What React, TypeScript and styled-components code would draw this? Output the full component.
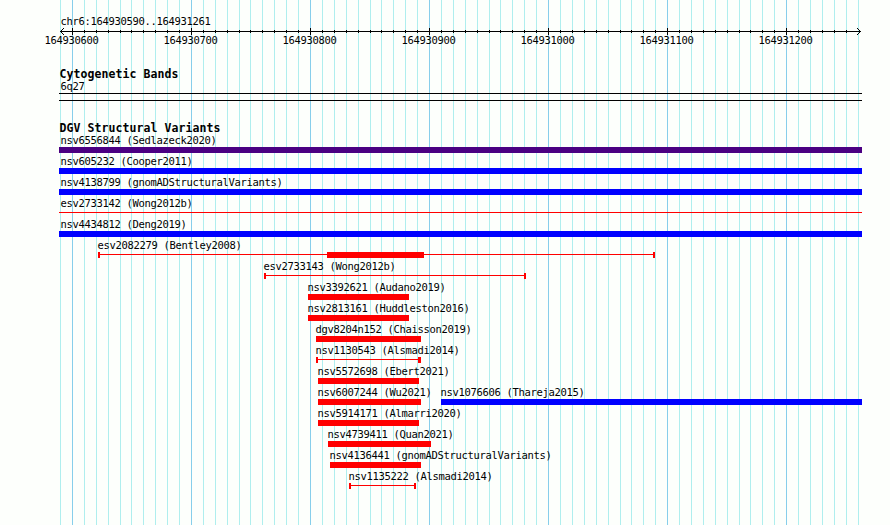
import styled, { createGlobalStyle } from "styled-components";

const GlobalStyle = createGlobalStyle`
    body {
        margin: 0;
        background: #fdfffc;
    }
`

const Browser = styled.main`
    position: relative;
    box-sizing: border-box;
    display: flex;
    flex-direction: column;
    width: 890px;
    height: 525px;
    overflow: hidden;
    color: #000;
    background: #fdfffc;
    font-family: "DejaVu Sans Mono", monospace;
    font-size: 10.5px;
    line-height: 10px;
    letter-spacing: -0.32px;
    white-space: pre;
`

// vertical lines that run behind every track
const GridLines = styled.svg`
    position: absolute;
    inset: 0;
    shape-rendering: crispEdges;
`

const Content = styled.div`
    position: relative;
    display: flex;
    flex-direction: column;
    padding-top: 15px;
`

const Region = styled.div`
    height: 12px;
    padding-left: 60.5px;
    line-height: 12px;
`

const RulerAxis = styled.svg`
    display: block;
    height: 8px;
    shape-rendering: crispEdges;
`

const RulerLabels = styled.div`
    display: grid;
    grid-template-columns: repeat(7, 119px);
    padding-left: 12px;
    height: 33px;
    text-align: center;
`

const TrackTitle = styled.h2`
    margin: 0;
    padding-left: 59.5px;
    height: 13px;
    font-size: 11.5px;
    font-weight: bold;
    line-height: 12px;
    letter-spacing: 0.08px;
`

const BandLabel = styled.div`
    height: 12px;
    padding-left: 60.5px;
`

const Band = styled.div`
    box-sizing: border-box;
    width: 803px;
    height: 8px;
    margin: 0 0 21px 59px;
    border-top: 1px solid #000;
    border-bottom: 1px solid #000;
`

const Row = styled.div`
    display: flex;
    height: 21px;
`

const Feature = styled.div<{ $gap: number; $width: number }>`
    flex: none;
    width: ${({ $width }) => $width}px;
    margin-left: ${({ $gap }) => $gap}px;
`

// names of features cut off at the left edge are set in by a pixel
const FeatureName = styled.div<{ $clipped: boolean }>`
    height: 12px;
    margin-left: ${({ $clipped }) => ($clipped ? 1.5 : -0.5)}px;
`

const Bar = styled.div<{ $color: string }>`
    height: 6px;
    background: ${({ $color }) => $color};
`

const Span = styled.div<{ $capped: boolean }>`
    display: flex;
    height: 6px;
    border: solid #f00;
    border-width: ${({ $capped }) => ($capped ? "0 2px" : "0")};
    background: linear-gradient(#f00, #f00) 0 2px / 100% 1px no-repeat;
`

const Inner = styled.div<{ $from: number; $width: number }>`
    width: ${({ $width }) => $width}px;
    height: 6px;
    margin-left: ${({ $from }) => $from}px;
    background: #f00;
`

type Variant = {
    name: string;
    start: number;
    end: number;
    kind?: "bar" | "span" | "line";
    color?: string;
    inner?: [number, number];
}

const LEFT = 59;
const RIGHT = 862;

const rows: Variant[][] = [
    [{ name: "nsv6556844 (Sedlazeck2020)", start: LEFT, end: RIGHT, color: "#4b0082" }],
    [{ name: "nsv605232 (Cooper2011)", start: LEFT, end: RIGHT, color: "#00f" }],
    [{ name: "nsv4138799 (gnomADStructuralVariants)", start: LEFT, end: RIGHT, color: "#00f" }],
    [{ name: "esv2733142 (Wong2012b)", start: LEFT, end: RIGHT, kind: "line" }],
    [{ name: "nsv4434812 (Deng2019)", start: LEFT, end: RIGHT, color: "#00f" }],
    [{ name: "esv2082279 (Bentley2008)", start: 98, end: 655, kind: "span", inner: [327, 424] }],
    [{ name: "esv2733143 (Wong2012b)", start: 264, end: 526, kind: "span" }],
    [{ name: "nsv3392621 (Audano2019)", start: 308, end: 409 }],
    [{ name: "nsv2813161 (Huddleston2016)", start: 308, end: 409 }],
    [{ name: "dgv8204n152 (Chaisson2019)", start: 316, end: 421 }],
    [{ name: "nsv1130543 (Alsmadi2014)", start: 316, end: 421, kind: "span", inner: [418, 419] }],
    [{ name: "nsv5572698 (Ebert2021)", start: 318, end: 419 }],
    [
        { name: "nsv6007244 (Wu2021)", start: 318, end: 421 },
        { name: "nsv1076606 (Thareja2015)", start: 441, end: RIGHT, color: "#00f" },
    ],
    [{ name: "nsv5914171 (Almarri2020)", start: 318, end: 419 }],
    [{ name: "nsv4739411 (Quan2021)", start: 328, end: 431 }],
    [{ name: "nsv4136441 (gnomADStructuralVariants)", start: 330, end: 421 }],
    [{ name: "nsv1135222 (Alsmadi2014)", start: 349, end: 416, kind: "span" }],
]

// one tick for every 10 bases, the first one at 164930590
const ticks = Array.from({ length: 68 }, (_, i) => ({
    x: Math.round(60 + i * 11.905),
    major: i % 10 === 1,
}));

const positions = [600, 700, 800, 900, 1000, 1100, 1200].map((p) => 164930000 + p);

const Glyph = ({ variant }: { variant: Variant }) => {
    const { start, kind = "bar", color = "#f00", inner } = variant;

    if (kind === "bar") {
        return <Bar $color={color} />;
    }
    return (
        <Span $capped={kind === "span"}>
            {
                inner ? <Inner $from={inner[0] - start - 2} $width={inner[1] - inner[0]} /> : null
            }
        </Span>
    );
}

const Ruler = () => (
    <>
        <Region>chr6:164930590..164931261</Region>
        <RulerAxis width="890" height="8">
            <rect x="60" y="4" width="801" height="1" />
            {
                ticks.slice(1, -1).map(({ x, major }) => (
                    <rect key={x} x={x} y={major ? 1 : 3} width="1" height={major ? 7 : 3} />
                ))
            }
            <path d="M64 1h-1v1h-1v1h-1v1h-1v1h1v1h1v1h1v1h1v-1h-1v-1h-1v-1h-1v-1h1v-1h1v-1h1z" />
            <path d="M857 1h1v1h1v1h1v1h1v1h-1v1h-1v1h-1v1h-1v-1h1v-1h1v-1h1v-1h-1v-1h-1v-1h-1z" />
        </RulerAxis>
        <RulerLabels>
            {
                positions.map((p) => <span key={p}>{p}</span>)
            }
        </RulerLabels>
    </>
)

const App = () => {
    return (
        <>
            <GlobalStyle />
            <Browser>
                <GridLines width="890" height="525">
                    {
                        ticks.map(({ x, major }) => (
                            <rect key={x} x={x} y="0" width="1" height="525" fill={major ? "#87ceeb" : "#afeeee"} />
                        ))
                    }
                </GridLines>

                <Content>
                    <Ruler />

                    <TrackTitle>Cytogenetic Bands</TrackTitle>
                    <BandLabel>6q27</BandLabel>
                    <Band />

                    <TrackTitle>DGV Structural Variants</TrackTitle>
                    {
                        rows.map((row) => (
                            <Row key={row[0].name}>
                                {
                                    row.map((variant, i) => (
                                        <Feature
                                        key={variant.name}
                                        $gap={variant.start - (i ? row[i - 1].end : 0)}
                                        $width={variant.end - variant.start}
                                        >
                                            <FeatureName $clipped={variant.start === LEFT}>{variant.name}</FeatureName>
                                            <Glyph variant={variant} />
                                        </Feature>
                                    ))
                                }
                            </Row>
                        ))
                    }
                </Content>
            </Browser>
        </>
    );
}

export default App;
